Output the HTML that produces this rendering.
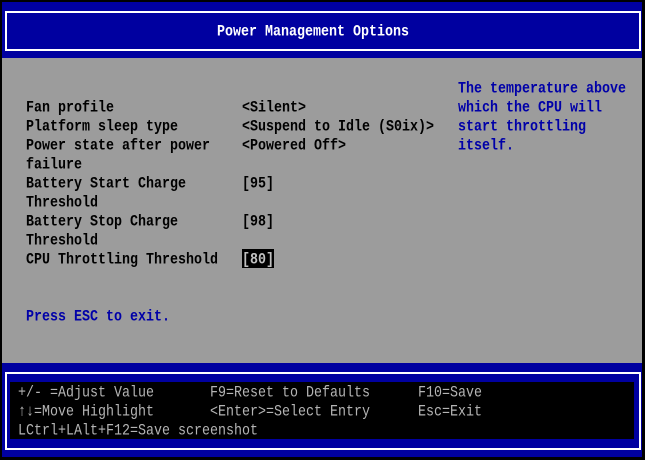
<!DOCTYPE html>
<html><head><style>
html,body{margin:0;padding:0;}
body{width:645px;height:460px;background:#000;position:relative;overflow:hidden;font-family:"Liberation Mono","DejaVu Sans Mono",monospace;font-size:13.33px;font-weight:bold;}
.a{position:absolute;}
.t{position:absolute;white-space:pre;line-height:19px;height:19px;transform:translateY(2px) scaleY(1.2);transform-origin:center;}
.b{font-weight:normal;color:#b4b4b4;}
</style></head><body>
<div class="a" style="left:2px;top:2px;width:640px;height:56px;background:#0000a0"></div>
<div class="a" style="left:5px;top:11px;width:632px;height:36px;border:2px solid #fff"></div>
<div class="t" style="left:217px;top:21px;color:#fff">Power Management Options</div>
<div class="a" style="left:2px;top:58px;width:640px;height:305px;background:#9c9c9c"></div>
<div class="t" style="left:26px;top:97px">Fan profile</div>
<div class="t" style="left:26px;top:116px">Platform sleep type</div>
<div class="t" style="left:26px;top:135px">Power state after power</div>
<div class="t" style="left:26px;top:154px">failure</div>
<div class="t" style="left:26px;top:173px">Battery Start Charge</div>
<div class="t" style="left:26px;top:192px">Threshold</div>
<div class="t" style="left:26px;top:211px">Battery Stop Charge</div>
<div class="t" style="left:26px;top:230px">Threshold</div>
<div class="t" style="left:26px;top:249px">CPU Throttling Threshold</div>
<div class="t" style="left:242px;top:97px">&lt;Silent&gt;</div>
<div class="t" style="left:242px;top:116px">&lt;Suspend to Idle (S0ix)&gt;</div>
<div class="t" style="left:242px;top:135px">&lt;Powered Off&gt;</div>
<div class="t" style="left:242px;top:173px">[95]</div>
<div class="t" style="left:242px;top:211px">[98]</div>
<div class="a" style="left:242px;top:249px;width:32px;height:19px;background:#000"></div>
<div class="t" style="left:242px;top:249px;color:#c0c0c0">[80]</div>
<div class="t" style="left:458px;top:78px;color:#0000a8">The temperature above</div>
<div class="t" style="left:458px;top:97px;color:#0000a8">which the CPU will</div>
<div class="t" style="left:458px;top:116px;color:#0000a8">start throttling</div>
<div class="t" style="left:458px;top:135px;color:#0000a8">itself.</div>
<div class="t" style="left:26px;top:306px;color:#0000a8">Press ESC to exit.</div>
<div class="a" style="left:2px;top:363px;width:640px;height:94px;background:#0000a0"></div>
<div class="a" style="left:5px;top:372px;width:632px;height:74px;border:2px solid #fff"></div>
<div class="a" style="left:10px;top:382px;width:624px;height:57px;background:#000"></div>
<div class="t b" style="left:18px;top:382px">+/- =Adjust Value</div>
<div class="t b" style="left:18px;top:401px">↑↓=Move Highlight</div>
<div class="t b" style="left:18px;top:420px">LCtrl+LAlt+F12=Save screenshot</div>
<div class="t b" style="left:210px;top:382px">F9=Reset to Defaults</div>
<div class="t b" style="left:210px;top:401px">&lt;Enter&gt;=Select Entry</div>
<div class="t b" style="left:418px;top:382px">F10=Save</div>
<div class="t b" style="left:418px;top:401px">Esc=Exit</div>
</body></html>
